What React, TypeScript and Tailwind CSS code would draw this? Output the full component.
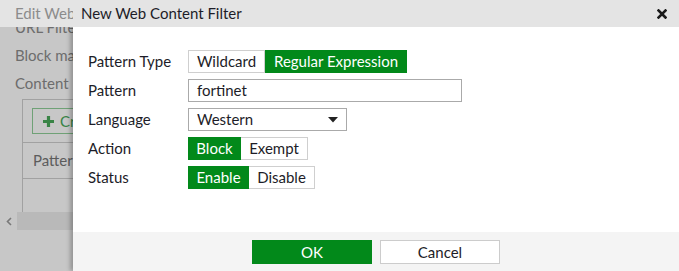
import React from 'react';

const GREEN = 'bg-[#02891a] text-white';

function Toggle({ items, active }: { items: { label: string; w: string }[]; active: number }) {
  return (
    <div className="flex h-[23px]">
      {items.map((it, i) => (
        <div
          key={it.label}
          className={`${it.w} flex items-center justify-center ${
            i === active ? `${GREEN} border border-[#02891a]` : 'border border-[#cfcfcf] text-[#1d1d28] bg-white'
          } ${i > 0 && i !== active ? 'border-l-0' : ''}`}
        >
          {it.label}
        </div>
      ))}
    </div>
  );
}

function Row({ label, children }: { label: string; children: React.ReactNode }) {
  return (
    <div className="flex items-center">
      <div className="w-[100px] text-[#1d1d28]">{label}</div>
      {children}
    </div>
  );
}

export default function App() {
  return (
    <div
      className="relative w-[679px] h-[271px] overflow-hidden bg-white text-[15px]"
      style={{ fontFamily: 'Lato, "Noto Sans", sans-serif' }}
    >
      {/* page behind the dialog */}
      <div className="flex flex-col h-full w-[73px] overflow-hidden whitespace-nowrap text-[#8c8c8c]">
        <div className="relative z-10 h-[27px] bg-[#e4e4e4] flex items-center pl-[15px] shrink-0">Edit Web Content Filter Profile</div>
        <div className="pl-[15px] -mt-[14px] leading-[28px]">
          <div>URL Filter</div>
          <div>Block malicious URLs</div>
          <div>Content Filter</div>
        </div>
        <div className="ml-[22px] mt-[2px] border-l border-t border-[#cfcfcf] h-[113px] flex flex-col">
          <div className="h-[43px] pl-[9px] pt-[8px] border-b border-[#cfcfcf]">
            <div className="h-[26px] w-[120px] border border-[#8fcf98] flex items-center pl-[9px] gap-[5px] text-[#4aa95a]">
              <svg width="13" height="13" viewBox="0 0 13 13">
                <path d="M6.5 1 V12 M1 6.5 H12" stroke="#4aa95a" strokeWidth="3.2" />
              </svg>
              <span>Create New</span>
            </div>
          </div>
          <div className="h-[36px] pl-[10px] flex items-center border-b border-[#cfcfcf] text-[#777]">Pattern</div>
        </div>
        <div className="h-[18px] flex items-center">
          <span className="w-[17px] flex justify-center">
            <svg width="6" height="9" viewBox="0 0 6 9">
              <path d="M5 1 L1.5 4.5 L5 8" stroke="#9a9a9a" strokeWidth="1.6" fill="none" />
            </svg>
          </span>
          <div className="flex-1 h-full bg-[#eeeeee]" />
        </div>
      </div>
      <div className="absolute inset-0 bg-black/[0.22]" />

      {/* dialog */}
      <div className="absolute top-0 bottom-0 left-[73px] right-0 flex flex-col bg-white shadow-[-3px_0_4px_rgba(0,0,0,0.25)]">
        <div className="h-[27px] bg-[#e4e4e4] flex items-center justify-between pl-[8px] pr-[12px] text-[#1d1d28] shrink-0">
          <span>New Web Content Filter</span>
          <svg width="10" height="10" viewBox="0 0 10 10">
            <path d="M1.5 1.5 L8.5 8.5 M8.5 1.5 L1.5 8.5" stroke="#1a1a1a" strokeWidth="2.6" strokeLinecap="square" />
          </svg>
        </div>
        <div className="flex-1 pl-[15px] pt-[23px] flex flex-col gap-[6px]">
          <Row label="Pattern Type">
            <Toggle
              items={[
                { label: 'Wildcard', w: 'w-[77px]' },
                { label: 'Regular Expression', w: 'w-[142px]' },
              ]}
              active={1}
            />
          </Row>
          <Row label="Pattern">
            <div className="w-[274px] h-[23px] border border-[#aaaaaa] flex items-center pl-[8px] text-[#1d1d28]">fortinet</div>
          </Row>
          <Row label="Language">
            <div className="w-[159px] h-[23px] border border-[#aaaaaa] flex items-center justify-between pl-[8px] pr-[8px] text-[#1d1d28]">
              <span>Western</span>
              <svg width="10" height="6" viewBox="0 0 10 6">
                <path d="M0 0 H10 L5 5.5 Z" fill="#222" />
              </svg>
            </div>
          </Row>
          <Row label="Action">
            <Toggle
              items={[
                { label: 'Block', w: 'w-[53px]' },
                { label: 'Exempt', w: 'w-[67px]' },
              ]}
              active={0}
            />
          </Row>
          <Row label="Status">
            <Toggle
              items={[
                { label: 'Enable', w: 'w-[61px]' },
                { label: 'Disable', w: 'w-[66px]' },
              ]}
              active={0}
            />
          </Row>
        </div>
        <div className="h-[39px] bg-[#f4f4f4] flex justify-center pt-[8px] gap-[8px] shrink-0">
          <div className={`w-[120px] h-[24px] ${GREEN} flex items-center justify-center`}>OK</div>
          <div className="w-[120px] h-[24px] bg-white border border-[#cccccc] text-[#1d1d28] flex items-center justify-center">Cancel</div>
        </div>
      </div>
    </div>
  );
}
